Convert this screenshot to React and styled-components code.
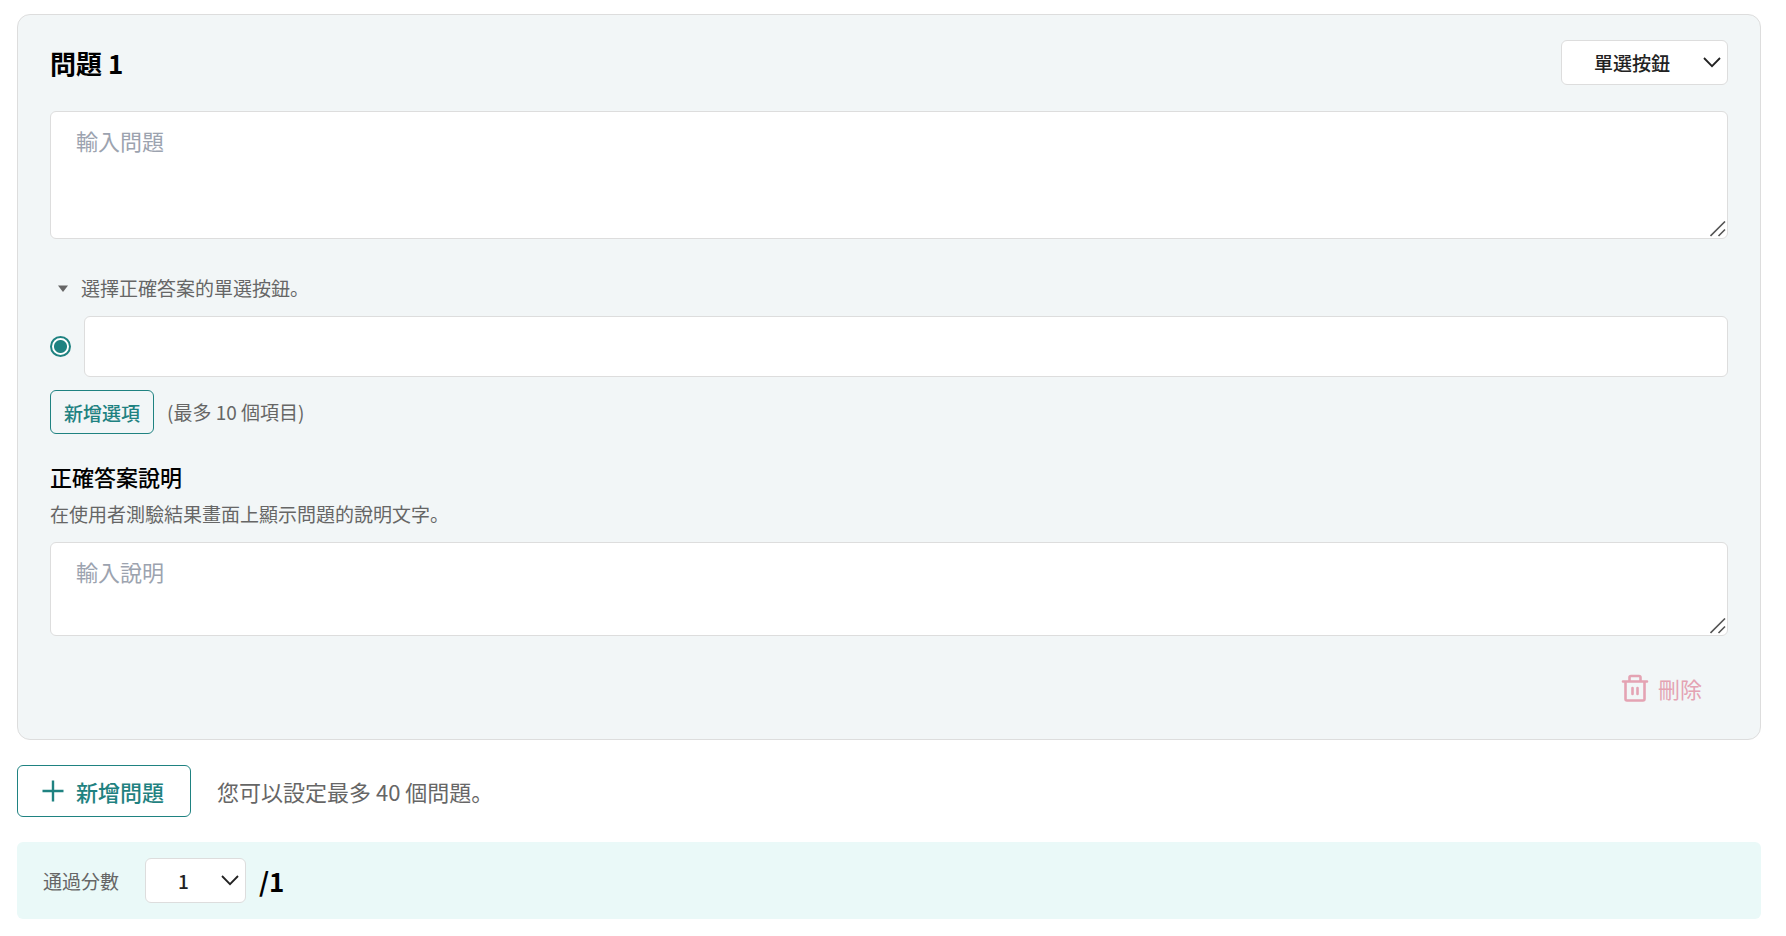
import React, { useState } from 'react';
import styled, { createGlobalStyle } from 'styled-components';

const GlobalStyle = createGlobalStyle`
  :root {
    --teal: #1f8281;
    --gray: #666666;
    --line: #dddddd;
    --pink: #e4a3b3;
  }
  * {
    box-sizing: border-box;
  }
  body {
    margin: 0;
    background: #ffffff;
    color: #000000;
    font-family: 'Noto Sans CJK JP', 'Noto Sans', sans-serif;
  }
  p, h2, h3 {
    margin: 0;
  }
  button, input, select, textarea {
    font-family: inherit;
  }
`;
const Page = styled.main`
  display: flex;
  flex-direction: column;
  gap: 25px;
  padding: 14px 25px 16px 17px;
`;
const Card = styled.section`
  display: flex;
  flex-direction: column;
  gap: 26px;
  padding: 25px 32px;
  background: #f2f6f7;
  border: 1px solid var(--line);
  border-radius: 13px;
`;
const CardHeader = styled.div`
  display: flex;
  align-items: center;
  justify-content: space-between;
`;
const Title = styled.h2`
  font-size: 26px;
  line-height: 36px;
  font-weight: 700;
`;
const SubTitle = styled.h3`
  font-size: 22px;
  line-height: 32px;
  font-weight: 500;
`;
const Text = styled.p`
  color: var(--gray);
  font-size: ${({ $large }) => ($large ? '22px' : '19px')};
  line-height: 30px;
`;
const SelectWrapper = styled.div`
  position: relative;
  display: flex;
  svg {
    position: absolute;
    top: 16px;
    right: 7px;
    pointer-events: none;
  }
`;
const Select = styled.select`
  appearance: none;
  height: 45px;
  padding: 0 56px 0 32px;
  background: #ffffff;
  border: 1px solid var(--line);
  border-radius: 6px;
  color: #222222;
  font-size: 19px;
  font-weight: 500;
  cursor: pointer;
`;
const AreaWrapper = styled.div`
  position: relative;
  svg {
    position: absolute;
    right: 2px;
    bottom: 2px;
    pointer-events: none;
  }
`;
const TextArea = styled.textarea`
  display: block;
  width: 100%;
  height: ${({ $tall }) => ($tall ? '128px' : '94px')};
  padding: 13px 25px;
  background: #ffffff;
  border: 1px solid var(--line);
  border-radius: 6px;
  outline: none;
  color: inherit;
  font-size: 22px;
  line-height: 30px;
  resize: vertical;
  &::placeholder {
    color: #9ca3af;
  }
  &::-webkit-resizer {
    background: transparent;
  }
`;
const Answers = styled.div`
  display: flex;
  flex-direction: column;
  gap: 13px;
  padding-top: 8px;
`;
const Toggle = styled.button`
  display: flex;
  align-items: center;
  align-self: flex-start;
  gap: 13px;
  padding: 0 0 0 8px;
  border: none;
  background: transparent;
  color: var(--gray);
  font-size: 19px;
  line-height: 30px;
  cursor: pointer;
`;
const Row = styled.div`
  display: flex;
  align-items: center;
  gap: ${({ $wide }) => ($wide ? '26px' : '13px')};
`;
const Radio = styled.input`
  appearance: none;
  flex: none;
  width: 21px;
  height: 21px;
  margin: 0;
  border: 2px solid var(--teal);
  border-radius: 50%;
  background: #ffffff;
  cursor: pointer;
  &:checked {
    background: radial-gradient(circle, var(--teal) 6px, #ffffff 7px);
  }
`;
const Input = styled.input`
  flex: 1;
  min-width: 0;
  height: 61px;
  padding: 0 26px;
  background: #ffffff;
  border: 1px solid var(--line);
  border-radius: 6px;
  outline: none;
  color: inherit;
  font-size: 22px;
`;
const Button = styled.button`
  display: flex;
  align-items: center;
  gap: 12px;
  height: ${({ $large }) => ($large ? '52px' : '44px')};
  padding: ${({ $large }) => ($large ? '0 26px 0 24px' : '0 13px')};
  background: ${({ $large }) => ($large ? '#ffffff' : 'transparent')};
  border: 1px solid var(--teal);
  border-radius: 6px;
  color: var(--teal);
  font-size: ${({ $large }) => ($large ? '22px' : '19px')};
  font-weight: 500;
  cursor: pointer;
`;
const DeleteButton = styled.button`
  display: flex;
  align-items: center;
  align-self: flex-end;
  gap: 9px;
  height: 52px;
  padding: 0 26px;
  border: none;
  background: transparent;
  color: var(--pink);
  font-size: 22px;
  cursor: pointer;
`;
const ExplanationHead = styled.div`
  display: flex;
  flex-direction: column;
  gap: 7px;
  padding-bottom: 13px;
`;
const ScoreBar = styled.section`
  display: flex;
  align-items: center;
  gap: 13px;
  padding: 16px 26px;
  background: #eaf9f8;
  border-radius: 6px;
`;
const ScoreLabel = styled.label`
  margin-right: 13px;
  color: var(--gray);
  font-size: 19px;
`;

const Chevron = () => (
  <svg width='18' height='12' viewBox='0 0 18 12' fill='none' stroke='#222222' strokeWidth='1.8'>
    <path d='M1 2 9 10.200 17 2' />
  </svg>
);
const Triangle = () => (
  <svg width='10' height='7' viewBox='0 0 10 7' fill='currentColor'>
    <path d='M0 .5h10L5 7z' />
  </svg>
);
const Grip = () => (
  <svg width='16' height='16' viewBox='0 0 16 16' fill='none' stroke='#555555' strokeWidth='1.6'>
    <path d='M.5 15 15 .5M8.500 15 15 8.500' />
  </svg>
);
const Plus = () => (
  <svg width='22' height='22' viewBox='0 0 22 22' fill='none' stroke='currentColor' strokeWidth='2.4'>
    <path d='M11 .5v21M.5 11h21' />
  </svg>
);
const Trash = () => (
  <svg
    width='28'
    height='28'
    viewBox='0 0 28 28'
    fill='none'
    stroke='currentColor'
    strokeWidth='2.6'
    strokeLinecap='round'
    strokeLinejoin='round'
  >
    <path d='M2 7.500h24M4.500 7.500V25q0 1.500 1.500 1.500h16q1.500 0 1.500-1.500V7.500M8.500 7V3.500q0-1.500 1.500-1.500h8q1.500 0 1.500 1.500V7' />
    <path d='M11.500 14v6M16.500 14v6' />
  </svg>
);

const App = () => {
  const [open, setOpen] = useState(true);
  const [options, setOptions] = useState(['']);
  const [correct, setCorrect] = useState(0);

  const onChange = (index, value) => {
    setOptions(prev => prev.map((item, i) => (i === index ? value : item)));
  };
  return (
    <Page>
      <GlobalStyle />
      <Card>
        <CardHeader>
          <Title id='question'>問題 1</Title>
          <SelectWrapper>
            <Select aria-labelledby='question' defaultValue='radio'>
              <option value='radio'>單選按鈕</option>
            </Select>
            <Chevron />
          </SelectWrapper>
        </CardHeader>
        <AreaWrapper>
          <TextArea $tall aria-labelledby='question' placeholder='輸入問題' />
          <Grip />
        </AreaWrapper>
        <Answers>
          <Toggle
            id='answers'
            type='button'
            aria-expanded={open}
            onClick={() => setOpen(!open)}
          >
            <Triangle />
            選擇正確答案的單選按鈕。
          </Toggle>
          {open &&
            options.map((value, index) => (
              <Row key={index}>
                <Radio
                  type='radio'
                  name='correct'
                  aria-labelledby='answers'
                  checked={correct === index}
                  onChange={() => setCorrect(index)}
                />
                <Input
                  type='text'
                  aria-labelledby='answers'
                  value={value}
                  onChange={e => onChange(index, e.target.value)}
                />
              </Row>
            ))}
          <Row>
            <Button
              type='button'
              disabled={options.length >= 10}
              onClick={() => setOptions([...options, ''])}
            >
              新增選項
            </Button>
            <Text>(最多 10 個項目)</Text>
          </Row>
        </Answers>
        <div>
          <ExplanationHead>
            <SubTitle>
              <label htmlFor='explanation'>正確答案說明</label>
            </SubTitle>
            <Text>在使用者測驗結果畫面上顯示問題的說明文字。</Text>
          </ExplanationHead>
          <AreaWrapper>
            <TextArea id='explanation' placeholder='輸入說明' />
            <Grip />
          </AreaWrapper>
        </div>
        <DeleteButton type='button'>
          <Trash />
          刪除
        </DeleteButton>
      </Card>
      <Row $wide>
        <Button $large type='button'>
          <Plus />
          新增問題
        </Button>
        <Text $large>您可以設定最多 40 個問題。</Text>
      </Row>
      <ScoreBar>
        <ScoreLabel htmlFor='score'>通過分數</ScoreLabel>
        <SelectWrapper>
          <Select id='score' defaultValue='1'>
            <option value='1'>1</option>
          </Select>
          <Chevron />
        </SelectWrapper>
        <Title as='p'>/1</Title>
      </ScoreBar>
    </Page>
  );
};

export default App;
